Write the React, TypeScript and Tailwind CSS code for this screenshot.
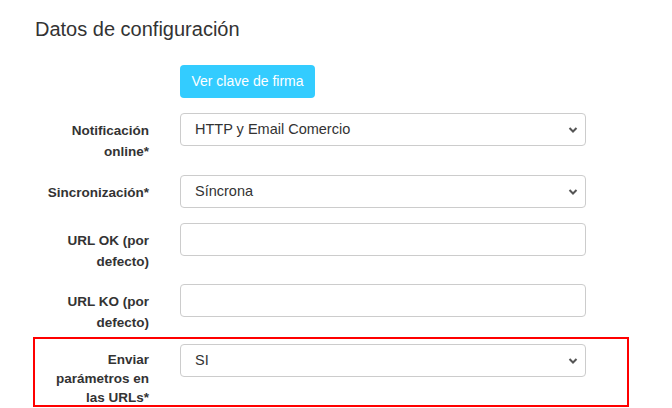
import React from "react";

const Chevron = () => (
  <svg width="10" height="7" viewBox="0 0 10 7" className="absolute right-[7px] top-1/2 -translate-y-1/2">
    <path d="M1.5 1.5 L5 5 L8.5 1.5" fill="none" stroke="#555" strokeWidth="2" />
  </svg>
);

const SelectBox = ({ value }: { value: string }) => (
  <div className="relative h-[33px] w-[406px] rounded-[4px] border border-[#cccccc] bg-white flex items-center pl-[14px] text-[14.5px] text-[#333]">
    {value}
    <Chevron />
  </div>
);

const InputBox = () => (
  <div className="h-[33px] w-[406px] rounded-[4px] border border-[#cccccc] bg-white" />
);

const Label = ({ lines, tight }: { lines: string[]; tight?: boolean }) => (
  <div
    className={
      tight
        ? "w-[150px] pr-[1px] pt-[6px] text-right text-[13.5px] font-bold leading-[19px] text-[#333]"
        : "w-[150px] pr-[1px] pt-[7px] text-right text-[13.5px] font-bold leading-[21px] text-[#333]"
    }
  >
    {lines.map((l, i) => (
      <div key={i}>{l}</div>
    ))}
  </div>
);

export default function App() {
  return (
    <div
      className="relative w-[672px] h-[408px] overflow-hidden bg-white"
      style={{ fontFamily: '"Liberation Sans", Arial, sans-serif' }}
    >
      <div className="pl-[35px] pt-[17px] text-[20px] leading-[24px] text-[#333]">Datos de configuración</div>
      <div className="mt-[24px] pl-[180px]">
        <div className="inline-flex h-[33px] w-[135px] items-center justify-center rounded-[4px] bg-[#33ccff] text-[14px] text-white">
          Ver clave de firma
        </div>
      </div>
      <div className="mt-[15px] flex items-start gap-[30px]">
        <Label lines={["Notificación", "online*"]} />
        <SelectBox value="HTTP y Email Comercio" />
      </div>
      <div className="mt-[13px] flex items-start gap-[30px]">
        <Label lines={["Sincronización*"]} />
        <SelectBox value="Síncrona" />
      </div>
      <div className="mt-[15px] h-[49px] flex items-start gap-[30px]">
        <Label lines={["URL OK (por", "defecto)"]} />
        <InputBox />
      </div>
      <div className="mt-[12px] flex items-start gap-[30px]">
        <Label lines={["URL KO (por", "defecto)"]} />
        <InputBox />
      </div>
      <div className="ml-[33px] mt-[4px] h-[70px] w-[596px] border-[2.5px] border-[#ff0000] pt-[5px]">
        <div className="-ml-[35px] flex items-start gap-[30px]">
          <Label tight lines={["Enviar", "parámetros en", "las URLs*"]} />
          <SelectBox value="SI" />
        </div>
      </div>
    </div>
  );
}
